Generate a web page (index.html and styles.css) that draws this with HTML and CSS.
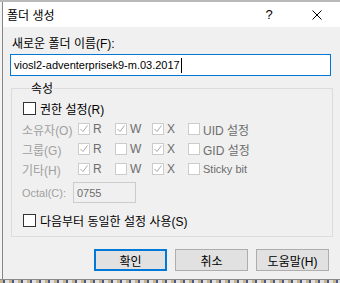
FILE: index.html
```html
<!DOCTYPE html>
<html lang="ko">
<head>
  <meta charset="UTF-8" />
  <title>폴더 생성</title>
  <link rel="stylesheet" href="styles.css">
</head>
<body>

  <div class="top-strip"></div>

  <section class="window">
    <div class="titlebar">
      <span class="title">폴더 생성</span>
      <span class="help">?</span>
      <span class="close">
        <svg width="10" height="10" viewBox="0 0 10 10">
          <path d="M0.5 0.5 L9.5 9.5 M9.5 0.5 L0.5 9.5" stroke="#000" stroke-width="1" fill="none"/>
        </svg>
      </span>
    </div>

    <div class="content">
      <div class="name-label">새로운 폴더 이름<span class="en">(F):</span></div>
      <div class="name-input"><span class="en small">viosl2-adventerprisek9-m.03.2017</span><span class="caret"></span></div>

      <fieldset class="props">
        <legend>속성</legend>

        <div class="check-row">
          <span class="cb"></span>
          <span>권한 설정<span class="en">(R)</span></span>
        </div>

        <div class="perm-grid">
          <span class="perm-label">소유자<span class="en">(O)</span></span>
          <span class="perm"><span class="cb off on"></span><span class="en">R</span></span>
          <span class="perm"><span class="cb off on"></span><span class="en">W</span></span>
          <span class="perm"><span class="cb off on"></span><span class="en">X</span></span>
          <span class="perm"><span class="cb off"></span><span><span class="en">UID</span> 설정</span></span>

          <span class="perm-label">그룹<span class="en">(G)</span></span>
          <span class="perm"><span class="cb off on"></span><span class="en">R</span></span>
          <span class="perm"><span class="cb off"></span><span class="en">W</span></span>
          <span class="perm"><span class="cb off on"></span><span class="en">X</span></span>
          <span class="perm"><span class="cb off"></span><span><span class="en">GID</span> 설정</span></span>

          <span class="perm-label">기타<span class="en">(H)</span></span>
          <span class="perm"><span class="cb off on"></span><span class="en">R</span></span>
          <span class="perm"><span class="cb off"></span><span class="en">W</span></span>
          <span class="perm"><span class="cb off on"></span><span class="en">X</span></span>
          <span class="perm"><span class="cb off"></span><span class="en small">Sticky bit</span></span>
        </div>

        <div class="octal-row">
          <span class="octal-label en small">Octal(C):</span>
          <span class="octal-input en small">0755</span>
        </div>

        <div class="check-row remember">
          <span class="cb"></span>
          <span>다음부터 동일한 설정 사용<span class="en">(S)</span></span>
        </div>
      </fieldset>

      <div class="buttons">
        <button class="btn default">확인</button>
        <button class="btn">취소</button>
        <button class="btn">도움말<span class="en">(H)</span></button>
      </div>
    </div>
  </section>

  <div class="bottom-strip"></div>

</body>
</html>
```

FILE: styles.css
```css
body {
  margin: 0;
  width: 340px;
  height: 283px;
  overflow: hidden;
  background: #f4f4f4;
  font-family: "Noto Sans CJK KR", "Noto Sans", sans-serif;
  font-size: 12px;
  color: #000;
}

/* latin runs: Malgun's latin is narrower than the CJK font's */
.en {
  font-family: "Liberation Sans", Arial, sans-serif;
  font-size: 12px;
}

.en.small {
  font-size: 11px;
}

.top-strip {
  height: 2px;
  background: #b8b8b8;
}

.bottom-strip {
  height: 3px;
  border-top: 1px solid #8a8a8a;
  background: repeating-linear-gradient(90deg, #c9b48a 0 3px, #4a5a8a 3px 5px, #e0e0e0 5px 9px);
}

.window {
  margin-left: 2px;
  height: 277px;
  border-left: 1px solid #858585;
  background: #f0f0f0;
  display: flex;
  flex-direction: column;
}

/* title bar */
.titlebar {
  height: 25px;
  background: #fff;
  display: flex;
  align-items: center;
  padding-left: 4px;
}

.title {
  flex: 1;
  font-size: 12px;
  margin-top: -1px;
}

.help {
  width: 46px;
  text-align: center;
  font-family: "Liberation Sans", sans-serif;
  font-size: 13px;
  margin-right: 2px;
}

.close {
  width: 46px;
  display: flex;
  justify-content: center;
}

/* dialog body */
.content {
  padding: 0 9px 0 7px;
}

.name-label {
  margin: 9px 0 0 2px;
  line-height: 14px;
}

.name-input {
  margin-top: 3px;
  height: 20px;
  border: 1px solid #0078d7;
  background: #fff;
  display: flex;
  align-items: center;
  padding-left: 3px;
  line-height: 14px;
}

.caret {
  width: 1px;
  height: 15px;
  background: #000;
  margin-left: 1px;
}

.props {
  margin: 5px -2px 0 1px;
  padding: 3px 0 6px 11px;
  border: 1px solid #dcdcdc;
}

.props legend {
  margin-left: 7px;
  padding: 0 1px;
  line-height: 14px;
}

.check-row {
  height: 20px;
  display: flex;
  align-items: center;
  gap: 4px;
}

.remember {
  margin-top: 7px;
}

.cb {
  width: 11px;
  height: 11px;
  border: 1px solid #333;
  background: #fff;
  display: inline-block;
  box-sizing: content-box;
}

.cb.off {
  width: 10px;
  height: 10px;
  border-color: #cccccc;
}

.cb.on {
  background: #fff url("data:image/svg+xml;utf8,<svg xmlns='http://www.w3.org/2000/svg' width='10' height='10'><path d='M1.5 5 L4 7.5 L8.5 1.5' stroke='%23a8a8a8' stroke-width='1' fill='none'/></svg>") no-repeat center;
}

.perm-grid {
  margin-top: 1px;
  display: grid;
  grid-template-columns: 55px 37px 37px 36px auto;
  grid-auto-rows: 20px;
  align-items: center;
  color: #6d6d6d;
}

.perm-label {
  color: #a0a0a0;
  margin-left: -1px;
}

.perm {
  display: flex;
  align-items: center;
  gap: 3px;
}

.octal-row {
  margin-top: 3px;
  height: 21px;
  display: flex;
  align-items: center;
}

.octal-label {
  width: 51px;
  color: #a0a0a0;
  margin-left: -1px;
}

.octal-input {
  width: 58px;
  height: 19px;
  border: 1px solid #cccccc;
  color: #6d6d6d;
  padding-left: 3px;
  display: flex;
  align-items: center;
}

/* buttons */
.buttons {
  margin: 12px 2px 0 0;
  display: flex;
  justify-content: flex-end;
  gap: 8px;
}

.btn {
  width: 73px;
  height: 22px;
  padding: 0;
  font-family: inherit;
  font-size: 12px;
  color: #000;
  background: #e1e1e1;
  border: 1px solid #adadad;
}

.btn.default {
  border: 2px solid #0078d7;
}
```
